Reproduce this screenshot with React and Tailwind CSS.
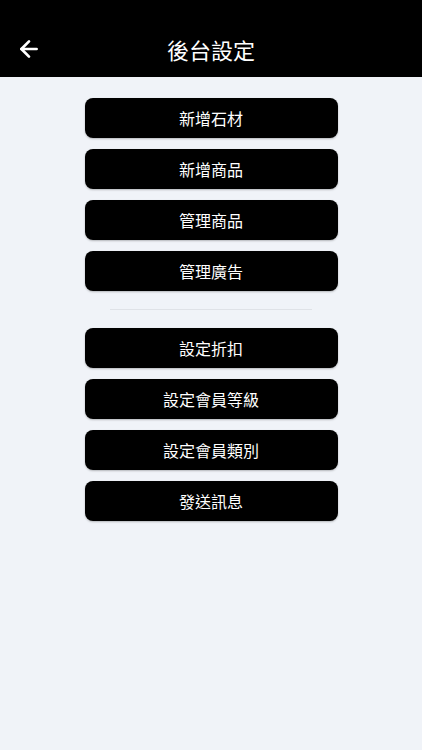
import { ArrowLeft } from 'lucide-react'

const TOP = ['新增石材', '新增商品', '管理商品', '管理廣告']
const BOTTOM = ['設定折扣', '設定會員等級', '設定會員類別', '發送訊息']

function MenuButton({ label }) {
  return (
    <button className="w-[253px] h-10 rounded-lg bg-black text-white text-[16px] shadow-[0_1px_2px_rgba(0,0,0,0.25)]">
      {label}
    </button>
  )
}

export default function App() {
  return (
    <div
      className="min-h-[750px] bg-[#f0f3f8] flex flex-col"
      style={{ fontFamily: '"Noto Sans CJK TC", "Noto Sans", sans-serif' }}
    >
      {/* Header */}
      <div className="h-[77px] bg-black relative flex items-end justify-center pb-[13px]">
        <button className="absolute left-[16px] bottom-[15px] text-white">
          <ArrowLeft size={26} strokeWidth={2.5} />
        </button>
        <h1 className="text-white text-[22px] leading-[30px]">後台設定</h1>
      </div>

      <div className="flex flex-col items-center pt-[21px]">
        <div className="flex flex-col gap-[11px]">
          {TOP.map((l) => (
            <MenuButton key={l} label={l} />
          ))}
        </div>

        <div className="w-[202px] h-px bg-[#dfe2e7] mt-[18px] mb-[18px]" />

        <div className="flex flex-col gap-[11px]">
          {BOTTOM.map((l) => (
            <MenuButton key={l} label={l} />
          ))}
        </div>
      </div>
    </div>
  )
}
